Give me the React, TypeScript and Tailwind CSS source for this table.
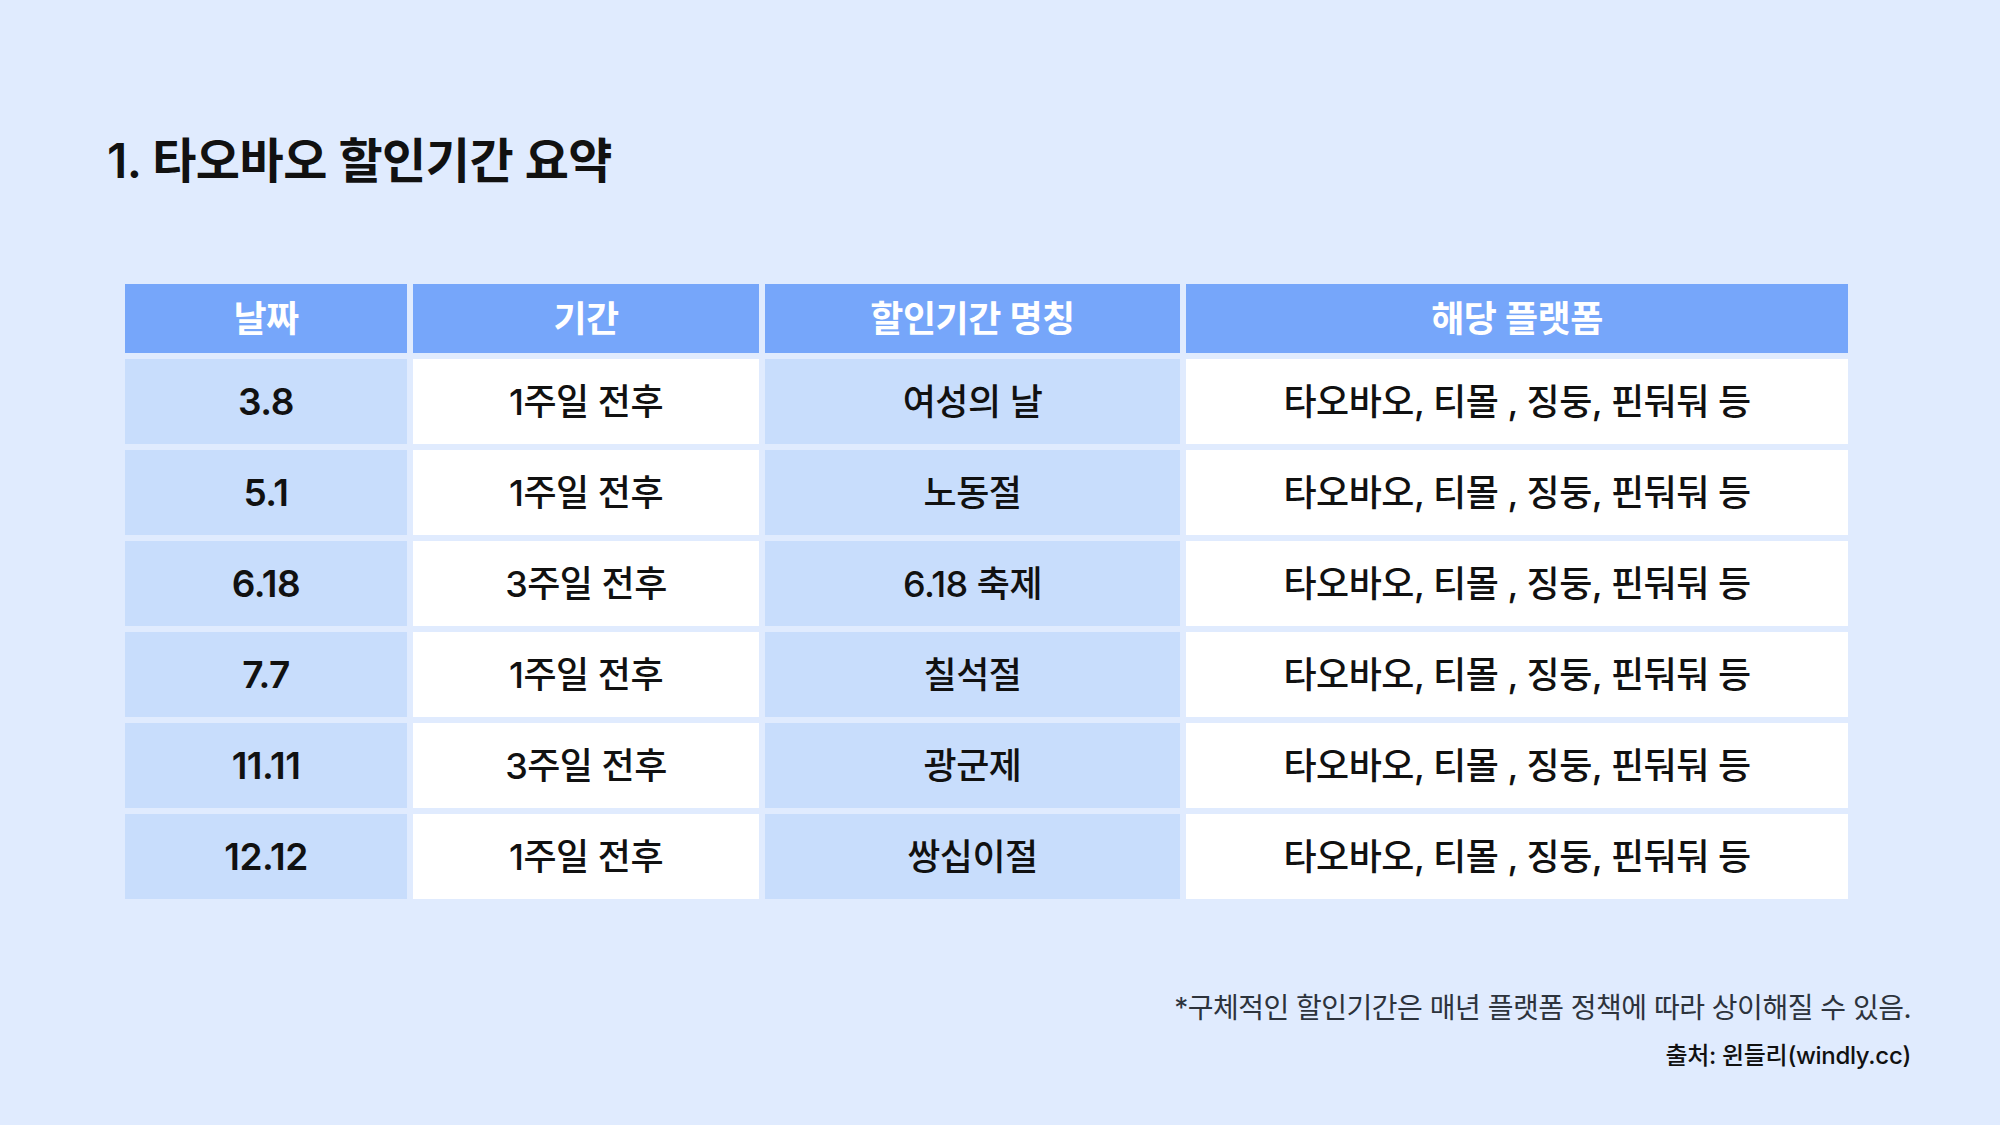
import React from 'react';

const rows = [
  { date: '3.8', period: '1주일 전후', name: '여성의 날' },
  { date: '5.1', period: '1주일 전후', name: '노동절' },
  { date: '6.18', period: '3주일 전후', name: '6.18 축제' },
  { date: '7.7', period: '1주일 전후', name: '칠석절' },
  { date: '11.11', period: '3주일 전후', name: '광군제' },
  { date: '12.12', period: '1주일 전후', name: '쌍십이절' },
];

const platforms = '타오바오, 티몰 , 징둥, 핀둬둬 등';

const App: React.FC = () => {
  return (
    <div className="w-full h-[1125px] bg-[#e0ebfe] font-['Inter','Noto_Sans_CJK_KR',sans-serif] text-[#111111] flex flex-col">
      {/* Title */}
      <h1 className="pl-[107px] pt-[131px] text-[48px] leading-[60px] font-semibold tracking-[-0.5px]">
        1. 타오바오 할인기간 요약
      </h1>

      {/* Table */}
      <div className="ml-[125px] mt-[93px] grid grid-cols-[282px_346px_415px_662px] gap-[6px] w-[1723px]">
        {['날짜', '기간', '할인기간 명칭', '해당 플랫폼'].map((h) => (
          <div
            key={h}
            className="h-[69px] bg-[#76a6fa] text-white text-[36px] font-semibold flex items-center justify-center tracking-[-0.5px]"
          >
            {h}
          </div>
        ))}
        {rows.map((r) => (
          <React.Fragment key={r.date}>
            <div className="h-[85px] bg-[#c8ddfc] flex items-center justify-center text-[37px] font-semibold tracking-[-0.5px]">
              {r.date}
            </div>
            <div className="h-[85px] bg-white flex items-center justify-center text-[36px] font-medium tracking-[-0.5px]">
              {r.period}
            </div>
            <div className="h-[85px] bg-[#c8ddfc] flex items-center justify-center text-[36px] font-medium tracking-[-0.5px]">
              {r.name}
            </div>
            <div className="h-[85px] bg-white flex items-center justify-center text-[36px] font-medium tracking-[-0.5px]">
              {platforms}
            </div>
          </React.Fragment>
        ))}
      </div>

      {/* Notes */}
      <div className="mt-[91px] pr-[89px] flex flex-col items-end">
        <p className="text-[28px] leading-[36px] text-[#2d333c] tracking-[-0.5px]">
          *구체적인 할인기간은 매년 플랫폼 정책에 따라 상이해질 수 있음.
        </p>
        <p className="mt-[14px] text-[24px] leading-[32px] font-medium text-[#111111] tracking-[-0.3px]">
          출처: 윈들리(windly.cc)
        </p>
      </div>
    </div>
  );
};

export default App;
